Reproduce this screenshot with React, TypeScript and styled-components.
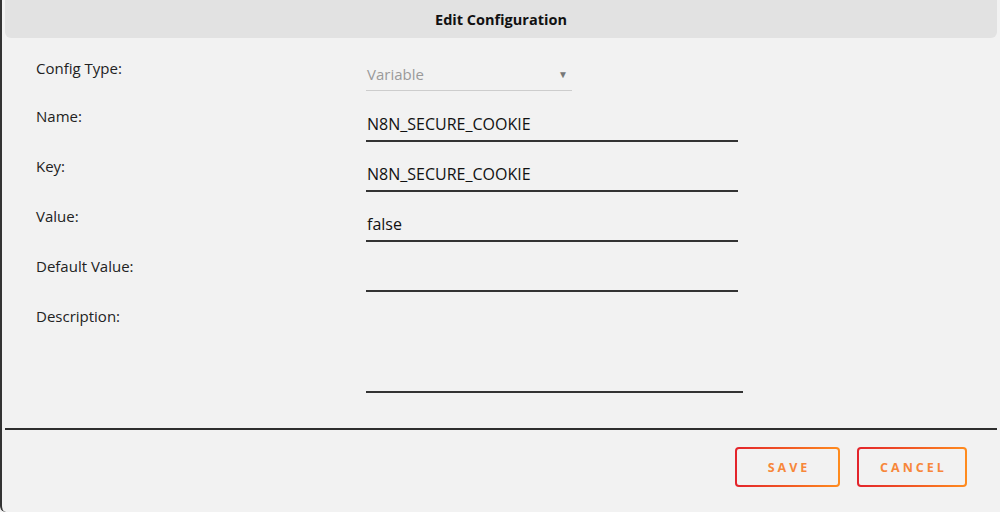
import styled, { createGlobalStyle } from 'styled-components';

const GlobalStyle = createGlobalStyle`
    html, body {
        margin: 0;
        padding: 0;
        background: #f2f2f2;
    }
    body {
        font-family: 'Open Sans', 'Liberation Sans', sans-serif;
        color: #222;
    }
`;

const Dialog = styled.div`
    width: 1000px;
    height: 512px;
    box-sizing: border-box;
    background: #f2f2f2;
    border-left: 2px solid #333;
    border-bottom-left-radius: 6px;
    overflow: hidden;
    display: flex;
    flex-direction: column;
`;

const Header = styled.header`
    flex: none;
    margin: 0 3px;
    height: 38px;
    background: #e2e2e2;
    border-radius: 0 0 6px 6px;
    display: flex;
    align-items: center;
    justify-content: center;
    font-size: 14.5px;
    font-weight: 700;
    color: #111;
`;

const Form = styled.div`
    display: grid;
    grid-template-columns: 330px 1fr;
    grid-template-rows: 48px repeat(4, 50px) auto;
    align-items: start;
    padding: 19px 0 0 34px;
`;

const Label = styled.label`
    font-size: 15px;
    line-height: 22px;
    color: #222;
`;

const SelectBox = styled.div`
    width: 206px;
    height: 34px;
    box-sizing: border-box;
    border-bottom: 1px solid #cdcdcd;
    display: flex;
    align-items: center;
    justify-content: space-between;
    padding: 0 4px 0 1px;
    color: #9a9a9a;
    font-size: 15px;
`;

const Arrow = styled.span`
    font-size: 10px;
    color: #777;
`;

const Input = styled.div<{ $width?: number }>`
    width: ${p => p.$width ?? 372}px;
    height: 37px;
    box-sizing: border-box;
    padding: 3px 0 0 1px;
    border-bottom: 2px solid #333;
    display: flex;
    align-items: center;
    font-size: 16px;
    color: #111;
`;

const TextArea = styled(Input)`
    height: 88px;
`;

const Divider = styled.hr`
    flex: none;
    margin: 35px 3px 0 3px;
    border: none;
    border-top: 2px solid #2e2e2e;
`;

const Footer = styled.div`
    display: flex;
    justify-content: flex-end;
    gap: 17px;
    padding: 17px 33px 0 0;
`;

const Button = styled.button<{ $width: number }>`
    width: ${p => p.$width}px;
    height: 40px;
    border: 2px solid transparent;
    border-radius: 4px;
    background:
        linear-gradient(#f2f2f2, #f2f2f2) padding-box,
        linear-gradient(to right, #e3232b, #ff8c1e) border-box;
    color: #f7873a;
    font-family: 'Open Sans', 'Liberation Sans', sans-serif;
    font-size: 12.5px;
    font-weight: 700;
    letter-spacing: 3px;
    padding: 0 0 0 3px;
    cursor: pointer;
`;

export default function App() {
    return (
        <Dialog>
            <GlobalStyle />
            <Header>Edit Configuration</Header>
            <Form>
                <Label>Config Type:</Label>
                <SelectBox>
                    <span>Variable</span>
                    <Arrow>▼</Arrow>
                </SelectBox>
                <Label>Name:</Label>
                <Input>N8N_SECURE_COOKIE</Input>
                <Label>Key:</Label>
                <Input>N8N_SECURE_COOKIE</Input>
                <Label>Value:</Label>
                <Input>false</Input>
                <Label>Default Value:</Label>
                <Input />
                <Label>Description:</Label>
                <TextArea $width={377} />
            </Form>
            <Divider />
            <Footer>
                <Button $width={105}>SAVE</Button>
                <Button $width={110}>CANCEL</Button>
            </Footer>
        </Dialog>
    );
}
